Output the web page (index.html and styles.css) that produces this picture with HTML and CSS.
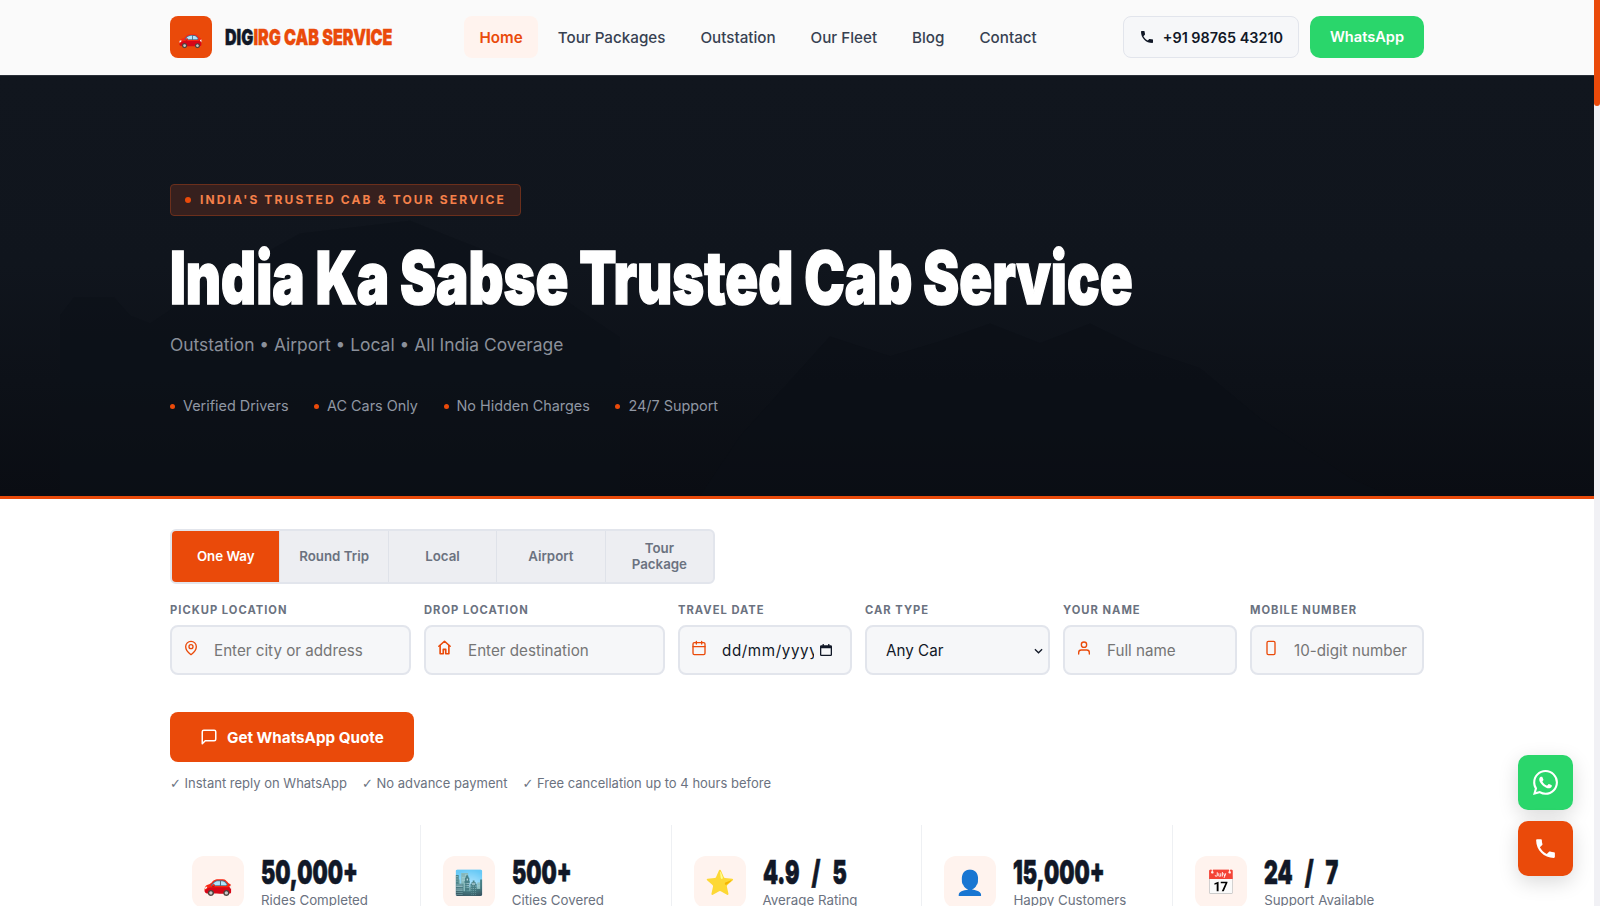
FILE: index.html

```html
<!DOCTYPE html>
<html lang="en-GB">
<head>
  <meta charset="UTF-8">
  <title>DIGIRG Cab Service</title>
  <link rel="stylesheet" href="styles.css">
</head>
<body>
  <header class="nav">
    <div class="wrap nav-row">
      <a class="brand" href="#">
        <span class="brand-icon">🚗</span>
        <span class="brand-name display"><span class="ink">DIG</span>IRG CAB SERVICE</span>
      </a>
      <nav class="links">
        <a class="link active" href="#">Home</a>
        <a class="link" href="#">Tour Packages</a>
        <a class="link" href="#">Outstation</a>
        <a class="link" href="#">Our Fleet</a>
        <a class="link" href="#">Blog</a>
        <a class="link" href="#">Contact</a>
      </nav>
      <div class="nav-actions">
        <a class="phone-btn" href="#">
          <svg class="phone-icon" viewBox="0 0 24 24"><path d="M6.62 10.79c1.44 2.83 3.76 5.14 6.59 6.59l2.2-2.2c.27-.27.67-.36 1.02-.24 1.12.37 2.33.57 3.57.57.55 0 1 .45 1 1V20c0 .55-.45 1-1 1-9.39 0-17-7.61-17-17 0-.55.45-1 1-1h3.5c.55 0 1 .45 1 1 0 1.25.2 2.45.57 3.57.11.35.03.74-.25 1.02l-2.2 2.2z"/></svg>
          +91 98765 43210
        </a>
        <a class="wa-btn" href="#">WhatsApp</a>
      </div>
    </div>
  </header>

  <section class="hero">
    <svg class="hero-bg" viewBox="0 0 1594 421" preserveAspectRatio="none">
      <path d="M60 421V240l14-18h40l16 18 20 8 60-40 90-50 110-13 100 40 70 50 40 27v159z" fill="#0c1118"/>
      <path d="M700 421l40-60 90-100 60 20 50-15 50-18 50 20 50-20 50 25 60 20 60 50 90 60 40 18z" fill="#0b0f16"/>
    </svg>
    <div class="wrap hero-body">
      <div class="badge"><span class="dot"></span>INDIA'S TRUSTED CAB &amp; TOUR SERVICE</div>
      <h1 class="hero-title display">India Ka Sabse Trusted Cab Service</h1>
      <p class="hero-sub">Outstation • Airport • Local • All India Coverage</p>
      <ul class="hero-points">
        <li><span class="dot"></span>Verified Drivers</li>
        <li><span class="dot"></span>AC Cars Only</li>
        <li><span class="dot"></span>No Hidden Charges</li>
        <li><span class="dot"></span>24/7 Support</li>
      </ul>
    </div>
  </section>

  <main class="wrap booking">
    <div class="tabs">
      <button class="tab active">One Way</button>
      <button class="tab">Round Trip</button>
      <button class="tab">Local</button>
      <button class="tab">Airport</button>
      <button class="tab">Tour Package</button>
    </div>

    <form class="fields">
      <div class="field">
        <label>Pickup Location</label>
        <div class="control">
          <svg class="field-icon" viewBox="0 0 24 24"><path d="M20 10c0 6-8 12-8 12s-8-6-8-12a8 8 0 0 1 16 0z"/><circle cx="12" cy="10" r="3"/></svg>
          <input type="text" placeholder="Enter city or address">
        </div>
      </div>
      <div class="field">
        <label>Drop Location</label>
        <div class="control">
          <svg class="field-icon house" viewBox="0 0 24 24"><path d="M3 10l9-8 9 8"/><path d="M5 9v13h5v-7h4v7h5V9"/></svg>
          <input type="text" placeholder="Enter destination">
        </div>
      </div>
      <div class="field">
        <label>Travel Date</label>
        <div class="control">
          <svg class="field-icon" viewBox="0 0 24 24"><rect x="3" y="4" width="18" height="18" rx="2"/><path d="M16 2v4M8 2v4M3 10h18"/></svg>
          <input class="date-input" type="text" value="dd/mm/yyyy">
          <svg class="date-picker" viewBox="0 0 14 14"><path d="M3 0h1.5v1.5h5V0H11v1.5h1.5A1.5 1.5 0 0 1 14 3v9.5a1.5 1.5 0 0 1-1.5 1.5h-11A1.5 1.5 0 0 1 0 12.5V3a1.5 1.5 0 0 1 1.5-1.5H3zM1.5 5v7.5h11V5z"/></svg>
        </div>
      </div>
      <div class="field">
        <label>Car Type</label>
        <div class="control">
          <select><option>Any Car</option><option>Sedan</option><option>SUV</option></select>
          <svg class="select-arrow" viewBox="0 0 10 6"><path d="M1 1l4 4 4-4"/></svg>
        </div>
      </div>
      <div class="field">
        <label>Your Name</label>
        <div class="control">
          <svg class="field-icon" viewBox="0 0 24 24"><circle cx="12" cy="7" r="4"/><path d="M20 21v-2a4 4 0 0 0-4-4H8a4 4 0 0 0-4 4v2"/></svg>
          <input type="text" placeholder="Full name">
        </div>
      </div>
      <div class="field">
        <label>Mobile Number</label>
        <div class="control">
          <svg class="field-icon" viewBox="0 0 24 24"><rect x="6" y="2" width="12" height="20" rx="2"/></svg>
          <input type="tel" placeholder="10-digit number">
        </div>
      </div>
    </form>

    <button class="quote-btn">
      <svg viewBox="0 0 24 24"><path d="M21 15a2 2 0 0 1-2 2H7l-4 4V5a2 2 0 0 1 2-2h14a2 2 0 0 1 2 2z"/></svg>
      Get WhatsApp Quote
    </button>
    <div class="notes">
      <span><span class="tick">✓</span> Instant reply on WhatsApp</span>
      <span><span class="tick">✓</span> No advance payment</span>
      <span><span class="tick">✓</span> Free cancellation up to 4 hours before</span>
    </div>

    <section class="stats">
      <div class="stat">
        <span class="stat-icon">🚗</span>
        <div><div class="stat-num display">50,000+</div><div class="stat-label">Rides Completed</div></div>
      </div>
      <div class="stat">
        <span class="stat-icon">🏙️</span>
        <div><div class="stat-num display">500+</div><div class="stat-label">Cities Covered</div></div>
      </div>
      <div class="stat">
        <span class="stat-icon">⭐</span>
        <div><div class="stat-num display">4.9 / 5</div><div class="stat-label">Average Rating</div></div>
      </div>
      <div class="stat">
        <span class="stat-icon">👤</span>
        <div><div class="stat-num display">15,000+</div><div class="stat-label">Happy Customers</div></div>
      </div>
      <div class="stat">
        <span class="stat-icon">📅</span>
        <div><div class="stat-num display">24 / 7</div><div class="stat-label">Support Available</div></div>
      </div>
    </section>
  </main>

  <div class="floats">
    <a class="float wa" href="#">
      <svg viewBox="0 0 24 24"><path d="M17.472 14.382c-.297-.149-1.758-.867-2.03-.967-.273-.099-.471-.148-.67.15-.197.297-.767.966-.94 1.164-.173.199-.347.223-.644.075-.297-.15-1.255-.463-2.39-1.475-.883-.788-1.48-1.761-1.653-2.059-.173-.297-.018-.458.13-.606.134-.133.298-.347.446-.52.149-.174.198-.298.298-.497.099-.198.05-.371-.025-.52-.075-.149-.669-1.612-.916-2.207-.242-.579-.487-.5-.669-.51-.173-.008-.371-.01-.57-.01-.198 0-.52.074-.792.372-.272.297-1.04 1.016-1.04 2.479 0 1.462 1.065 2.875 1.213 3.074.149.198 2.096 3.2 5.077 4.487.709.306 1.262.489 1.694.625.712.227 1.36.195 1.871.118.571-.085 1.758-.719 2.006-1.413.248-.694.248-1.289.173-1.413-.074-.124-.272-.198-.57-.347m-5.421 7.403h-.004a9.87 9.87 0 01-5.031-1.378l-.361-.214-3.741.982.998-3.648-.235-.374a9.86 9.86 0 01-1.51-5.26c.001-5.45 4.436-9.884 9.888-9.884 2.64 0 5.122 1.03 6.988 2.898a9.825 9.825 0 012.893 6.994c-.003 5.45-4.437 9.884-9.885 9.884m8.413-18.297A11.815 11.815 0 0012.05 0C5.495 0 .16 5.335.157 11.892c0 2.096.547 4.142 1.588 5.945L.057 24l6.305-1.654a11.882 11.882 0 005.683 1.448h.005c6.554 0 11.89-5.335 11.893-11.893a11.821 11.821 0 00-3.48-8.413z"/></svg>
    </a>
    <a class="float call" href="#">
      <svg viewBox="0 0 24 24"><path d="M6.62 10.79c1.44 2.83 3.76 5.14 6.59 6.59l2.2-2.2c.27-.27.67-.36 1.02-.24 1.12.37 2.33.57 3.57.57.55 0 1 .45 1 1V20c0 .55-.45 1-1 1-9.39 0-17-7.61-17-17 0-.55.45-1 1-1h3.5c.55 0 1 .45 1 1 0 1.25.2 2.45.57 3.57.11.35.03.74-.25 1.02l-2.2 2.2z"/></svg>
    </a>
  </div>

  <div class="scrollbar"><div class="scrollbar-thumb"></div></div>
</body>
</html>
```

FILE: styles.css

```css
* { box-sizing: border-box; }
html, body { height: 100%; overflow: hidden; }
body { margin: 0; padding-right: 6px; background: #fff; color: #111827; font-family: Inter, "Liberation Sans", sans-serif; }
a { text-decoration: none; color: inherit; }
ul { list-style: none; margin: 0; padding: 0; }

.wrap { max-width: 1318px; margin: 0 auto; padding: 0 32px; }

/* condensed heavy headings: no such font installed, so squeeze Inter Black */
.display { display: inline-block; font-weight: 900; transform-origin: left center; transform: scaleX(.72); white-space: nowrap; }

/* nav */
.nav { height: 76px; background: #fafafa; border-bottom: 1px solid #2a2f38; }
.nav-row { height: 74px; display: flex; align-items: center; }
.brand { display: flex; align-items: center; gap: 13px; width: 284px; flex: none; }
.brand-icon { width: 42px; height: 42px; background: #ea4a0a; border-radius: 8px; display: flex; align-items: center; justify-content: center; font-size: 20px; }
.brand-name { font-size: 22px; color: #ea4a0a; transform: scaleX(.73); -webkit-text-stroke: .4px #ea4a0a; }
.ink { color: #111827; -webkit-text-stroke: .4px #111827; }
.links { display: flex; gap: 4px; margin-left: 10px; }
.link { height: 42px; padding: 0 15.5px; display: flex; align-items: center; border-radius: 8px; font-size: 15.2px; font-weight: 500; color: #374151; }
.link.active { background: #fff3ee; color: #ea4a0a; font-weight: 600; }
.nav-actions { margin-left: auto; display: flex; gap: 11px; }
.phone-btn { height: 42px; padding: 0 15px; display: flex; align-items: center; gap: 8px; background: #f6f7f9; border: 1px solid #e2e5ec; border-radius: 8px; font-size: 14.4px; font-weight: 600; color: #111827; }
.phone-icon { width: 16px; height: 16px; fill: #111827; }
.wa-btn { height: 42px; width: 114px; display: flex; align-items: center; justify-content: center; background: #2ad66b; border-radius: 10px; color: #fff; font-size: 14.6px; font-weight: 600; }

/* hero */
.hero { position: relative; height: 423px; background: linear-gradient(#11161e, #10151d 45%, #0a0d13); border-bottom: 3px solid #ea4a0a; overflow: hidden; }
.hero-bg { position: absolute; left: 0; top: 0; width: 100%; height: 100%; opacity: .55; }
.hero-body { position: relative; padding-top: 108px; }
.badge { display: inline-flex; align-items: center; gap: 9px; height: 32px; padding: 0 14px 1px; background: #36201e; border: 1px solid #6b2f1c; border-radius: 4px; color: #f5804a; font-size: 12px; font-weight: 700; letter-spacing: 2.13px; }
.dot { width: 6px; height: 6px; border-radius: 50%; background: #ea4a0a; flex: none; }
.hero-title { display: block; margin: 19px 0 0; font-size: 73px; line-height: 86px; color: #fff; transform: scaleX(.744); -webkit-text-stroke: 1.6px #fff; }
.hero-sub { margin: 10px 0 0; font-size: 17.4px; line-height: 28px; color: #8b909a; }
.hero-points { display: flex; gap: 25.6px; margin-top: 37px; }
.hero-points li { display: flex; align-items: center; gap: 8px; font-size: 14.4px; line-height: 20px; color: #9097a3; }
.hero-points .dot { width: 5px; height: 5px; }

/* booking */
.booking { padding-top: 30px; }
.tabs { display: inline-flex; background: #edeef2; border: 2px solid #e2e5ec; border-radius: 6px; overflow: hidden; vertical-align: top; }
.tab { width: 108.4px; height: 51px; padding: 0 14px 2px; border: 0; border-right: 1px solid #dfe2e9; background: transparent; color: #6b7280; font: 600 13.3px/16px Inter, sans-serif; }
.tab:last-child { border-right: 0; width: 107.6px; }
.tab.active { background: #ea4a0a; color: #fff; }

.fields { display: grid; grid-template-columns: 241fr 241fr 174fr 185fr 174fr 174fr; gap: 13px; margin-top: 19px; }
.field { min-width: 0; }
.field label { display: block; margin-bottom: 8px; font-size: 11.2px; line-height: 14px; font-weight: 700; letter-spacing: 1px; text-transform: uppercase; color: #6b7280; }
.control { position: relative; }
.control input, .control select { width: 100%; height: 50px; padding: 0 4px 0 42px; background: #f6f7f9; border: 2px solid #e2e5ec; border-radius: 8px; font: 400 15.2px Inter, sans-serif; color: #111827; outline: 0; }
.control select { padding-left: 19px; appearance: none; }
.control input::placeholder { color: #757575; }
.control .date-input { padding-right: 36px; letter-spacing: .6px; }
.field-icon { position: absolute; left: 13px; top: 15px; width: 16px; height: 16px; fill: none; stroke: #ea4a0a; stroke-width: 2; stroke-linecap: round; stroke-linejoin: round; }
.field-icon.house { stroke-width: 2.6; width: 15px; height: 15px; }
.date-picker { position: absolute; right: 20px; top: 19px; width: 12px; height: 12px; fill: #111827; }
.select-arrow { position: absolute; right: 7px; top: 23px; width: 9px; height: 6px; fill: none; stroke: #111827; stroke-width: 1.4; pointer-events: none; }

.quote-btn { display: flex; align-items: center; gap: 9px; height: 50px; margin-top: 37px; padding: 0 30px; background: #ea4a0a; border: 0; border-radius: 8px; color: #fff; font: 700 15.2px Inter, sans-serif; }
.quote-btn svg { width: 18px; height: 18px; fill: none; stroke: #fff; stroke-width: 2; stroke-linejoin: round; }
.notes { display: flex; gap: 15px; margin-top: 12px; font-size: 13px; line-height: 18px; color: #6b7280; }
.tick { font-family: "DejaVu Sans", sans-serif; }

.stats { display: grid; grid-template-columns: repeat(5, minmax(0, 1fr)); margin-top: 32px; }
.stat { display: flex; gap: 17px; height: 120px; padding: 31px 22px 0; border-right: 1px solid #eef0f3; }
.stat:last-child { border-right: 0; }
.stat-icon { flex: none; width: 52px; height: 52px; background: #fff3ee; border-radius: 12px; display: flex; align-items: center; justify-content: center; font-size: 24px; }
.stat-num { display: block; margin-top: -1px; font-size: 33px; line-height: 34px; color: #111827; transform: scaleX(.65); word-spacing: 12px; -webkit-text-stroke: .7px #111827; }
.stat-label { margin-top: 2px; font-size: 13.3px; line-height: 18px; color: #6b7280; }

/* floating buttons */
.floats { position: fixed; right: 27px; bottom: 30px; display: flex; flex-direction: column; gap: 11px; }
.float { width: 55px; height: 55px; border-radius: 10px; display: flex; align-items: center; justify-content: center; box-shadow: 0 6px 20px rgba(0,0,0,.15); }
.float svg { width: 25px; height: 25px; fill: #fff; }
.float.wa { background: #2ad66b; }
.float.call { background: #ea4a0a; }

/* thin scrollbar */
.scrollbar { position: fixed; right: 0; top: 0; bottom: 0; width: 6px; background: #f1f1f5; }
.scrollbar-thumb { height: 106px; background: #ea4a0a; border-radius: 0 0 3px 3px; }
```
